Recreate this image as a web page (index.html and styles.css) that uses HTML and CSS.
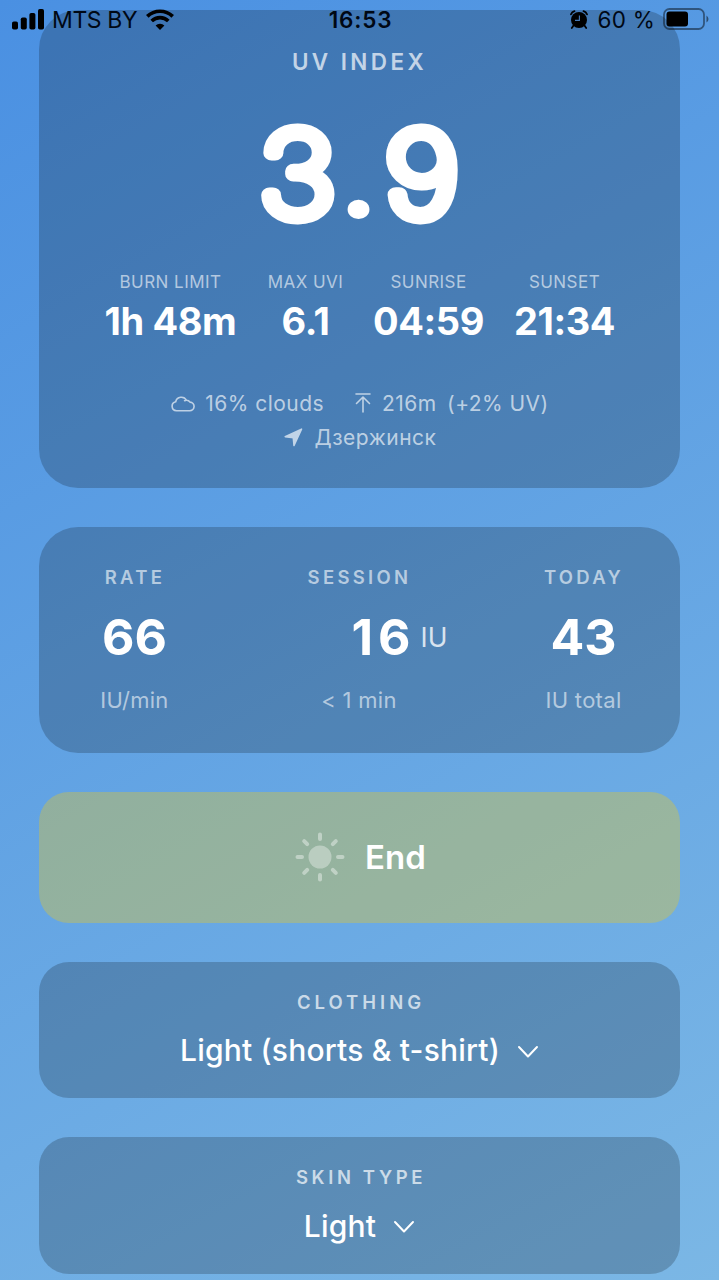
FILE: index.html
```html
<!DOCTYPE html>
<html lang="en">
<head>
<meta charset="utf-8">
<title>UV Index</title>
<link rel="stylesheet" href="styles.css">
</head>
<body>
<header class="status">
  <div class="status-left">
    <svg class="signal" width="32" height="21" viewBox="0 0 32 21"><rect x="0" y="12.5" width="6" height="8" rx="1.8"/><rect x="8.8" y="8.5" width="6" height="12" rx="1.8"/><rect x="17.4" y="4" width="6" height="16.500" rx="1.8"/><rect x="26" y="0" width="6" height="20.500" rx="1.8"/></svg>
    <span class="carrier">MTS BY</span>
    <svg width="28" height="21" viewBox="0 0 28 21"><g fill="none" stroke="#000" stroke-width="3.700"><path d="M1.300 7.400A18.200 18.200 0 0 1 26.700 7.400"/><path d="M5.700 12A12 12 0 0 1 22.300 12"/></g><path d="M14 21L9.600 16.500A6.300 6.300 0 0 1 18.400 16.500Z"/></svg>
  </div>
  <span class="clock">16:53</span>
  <div class="status-right">
    <svg width="18" height="19" viewBox="0 0 18 19"><circle cx="9" cy="10" r="8"/><path d="M1 4.300A5 5 0 0 1 4.500 1.200M13.500 1.200A5 5 0 0 1 17 4.300M3.500 15.500L1.800 18M14.500 15.500L16.200 18" fill="none" stroke="#000" stroke-width="1.800" stroke-linecap="round"/><path d="M9.400 5.500V10.400H5" fill="none" stroke="#467ab7" stroke-width="1.100"/></svg>
    <span class="percent">60 %</span>
    <svg width="46" height="22" viewBox="0 0 46 22"><rect x="1" y="1" width="40" height="20" rx="5.500" fill="none" stroke="#000" stroke-opacity=".45" stroke-width="1.800"/><rect x="3.500" y="3.500" width="21.500" height="15" rx="3"/><path d="M43.500 7.500Q45.500 9 45.500 11T43.500 14.500Z" fill-opacity=".5"/></svg>
  </div>
</header>
<main class="screen">
  <section class="card uv">
    <h1 class="uv-title">UV INDEX</h1>
    <svg class="uv-value" width="220" height="160" viewBox="0 0 220 160"><text transform="scale(1.13 1)" x="42 96 152" y="122.500" text-anchor="middle">3<tspan class="point">.</tspan>9</text></svg>
    <div class="stats">
      <div class="stat"><span class="stat-label">BURN LIMIT</span><span class="stat-value">1h 48m</span></div>
      <div class="stat"><span class="stat-label">MAX UVI</span><span class="stat-value">6.1</span></div>
      <div class="stat"><span class="stat-label">SUNRISE</span><span class="stat-value">04:59</span></div>
      <div class="stat"><span class="stat-label">SUNSET</span><span class="stat-value">21:34</span></div>
    </div>
    <div class="conditions">
      <svg width="24" height="17" viewBox="0 0 24 17"><path d="M5.500 15.700H18.500A4.300 4.300 0 0 0 19 7.100A4 4 0 0 0 15.400 5.200A5.800 5.800 0 0 0 4.700 6.800A4.500 4.500 0 0 0 5.500 15.700ZM15.400 5.200A4 4 0 0 0 13.600 5.700"/></svg>
      <span class="clouds">16% clouds</span>
      <svg class="altitude-icon" width="16" height="20" viewBox="0 0 16 20"><path d="M1 1H15M8 19V4M1.500 10.500L8 4L14.500 10.500"/></svg>
      <span class="altitude">216m</span>
      <span class="boost">(+2% UV)</span>
    </div>
    <div class="place">
      <svg width="19" height="19" viewBox="0 0 19 19"><path d="M1.200 8.700L17.500 1.200L10 17.500L9.300 9.800Z"/></svg>
      <span>Дзержинск</span>
    </div>
  </section>
  <section class="card dose">
    <div class="dose-col"><span class="dose-label">RATE</span><span class="dose-value">66</span><span class="dose-note">IU/min</span></div>
    <div class="dose-col session"><span class="dose-label">SESSION</span><span class="dose-value">16<small class="unit">IU</small></span><span class="dose-note">&lt; 1 min</span></div>
    <div class="dose-col"><span class="dose-label">TODAY</span><span class="dose-value">43</span><span class="dose-note">IU total</span></div>
  </section>
  <button class="end">
    <svg width="50" height="50" viewBox="0 0 50 50"><circle cx="25" cy="25" r="11.500"/><path d="M25 2.500V7M25 43V47.500M2.500 25H7M43 25H47.500M9.200 9.200L12.200 12.200M37.800 37.800L40.800 40.800M9.200 40.800L12.200 37.800M37.800 12.200L40.800 9.200"/></svg>
    <span>End</span>
  </button>
  <section class="card picker">
    <h2 class="picker-label">CLOTHING</h2>
    <div class="picker-value"><span class="clothing-text">Light (shorts &amp; t-shirt)</span><svg width="22" height="14" viewBox="0 0 22 14"><path d="M2 2L11 11.500L20 2"/></svg></div>
  </section>
  <section class="card picker">
    <h2 class="picker-label skin">SKIN TYPE</h2>
    <div class="picker-value"><span>Light</span><svg width="22" height="14" viewBox="0 0 22 14"><path d="M2 2L11 11.500L20 2"/></svg></div>
  </section>
</main>
</body>
</html>
```
FILE: styles.css
```css
* { box-sizing: border-box; }
body {
  margin: 0;
  height: 1280px;
  overflow: hidden;
  position: relative;
  background: linear-gradient(150.7deg, #4a90e2, #7bb7e5);
  color: #fff;
  font-family: Inter, "Liberation Sans", sans-serif;
}
svg { display: block; flex: none; }
span, h1, h2 { white-space: nowrap; }

/* The status bar floats over the scrolled content. */
.status {
  position: absolute;
  inset: 0 0 auto;
  z-index: 1;
  height: 38px;
  padding: 0 10px 0 12px;
  display: flex;
  justify-content: space-between;
  align-items: center;
  color: #000814;
}
.status-left, .status-right { display: flex; align-items: center; width: 240px; }
.status-right { justify-content: flex-end; }
.carrier { margin: 2px 9px 0 8px; font-size: 23px; letter-spacing: -.4px; }
.clock { font-size: 22.500px; font-weight: 600; letter-spacing: .8px; }
.percent { margin: 1px 8px 0 10px; font-size: 22.500px; letter-spacing: .2px; }

.screen {
  padding: 10px 39px 0;
  display: flex;
  flex-direction: column;
  gap: 39px;
}
.card { flex: none; background: rgba(0, 0, 0, .2); border-radius: 39px; }

.uv { height: 478px; display: flex; flex-direction: column; align-items: center; }
.uv-title {
  margin: 37px 0 0;
  font-size: 22.500px;
  line-height: 30px;
  font-weight: 600;
  letter-spacing: 3.400px;
  color: rgba(255, 255, 255, .7);
}
.uv-value { margin-top: 17px; }
/* A thin face with a round-joined outline gives rounded terminals. */
.uv-value text {
  font-size: 115.500px;
  font-weight: 130;
  font-variation-settings: "opsz" 14;
  fill: #fff;
  stroke: #fff;
  stroke-width: 15px;
  stroke-linejoin: round;
}
.uv-value .point { font-weight: 400; stroke-width: 4px; }
.stats {
  margin-top: 16px;
  display: grid;
  grid-template-columns: 134px 76px 110px 102px;
  column-gap: 30px;
}
.stat { display: flex; flex-direction: column; align-items: center; }
.stat-label { font-size: 17px; line-height: 24px; color: rgba(255, 255, 255, .6); letter-spacing: .45px; }
.stat-value { margin-top: 3px; font-size: 38px; line-height: 48px; font-weight: 650; letter-spacing: -.4px; }
.conditions {
  margin-top: 41px;
  height: 34px;
  padding-left: 1px;
  display: flex;
  align-items: center;
  color: rgba(255, 255, 255, .65);
  font-size: 21px;
  letter-spacing: .45px;
}
.conditions path { fill: none; stroke: rgba(255, 255, 255, .65); stroke-width: 1.600; stroke-linecap: round; stroke-linejoin: round; }
.clouds { margin-left: 10px; }
.altitude-icon { margin-left: 31px; }
.altitude { margin-left: 11px; }
.boost { margin-left: 10.500px; }
.place { height: 34px; padding-left: 1px; display: flex; align-items: center; gap: 12px; color: rgba(255, 255, 255, .65); font-size: 21px; letter-spacing: .5px; }
.place path { fill: #c1d4e8; stroke: #c1d4e8; stroke-width: 1.600; stroke-linejoin: round; }

.dose { height: 226px; padding: 37px 57px 0 56px; display: flex; justify-content: space-between; }
.dose-col { display: flex; flex-direction: column; align-items: center; width: 79px; }
.dose-label { padding-left: 1px; font-size: 18.500px; line-height: 26px; font-weight: 600; letter-spacing: 3.300px; color: rgba(255, 255, 255, .6); }
.dose-value { margin-top: 17px; font-size: 50px; line-height: 60px; height: 60px; font-weight: 700; }
.dose-note { margin-top: 19px; font-size: 22px; line-height: 28px; font-weight: 380; letter-spacing: .3px; color: rgba(255, 255, 255, .58); }
.session .dose-value { align-self: flex-start; margin-left: 32px; display: flex; align-items: center; letter-spacing: 5px; }
.unit { margin-left: 5px; font-size: 26.500px; font-weight: 400; letter-spacing: 0; color: rgba(255, 255, 255, .8); }

.end {
  flex: none;
  height: 130.500px;
  padding: 0 0 0 2px;
  border: 0;
  border-radius: 30px;
  background: rgba(255, 204, 0, .3);
  display: flex;
  justify-content: center;
  align-items: center;
  gap: 20px;
  color: #fff;
  font: 600 33px Inter, sans-serif;
}
.end circle { fill: rgba(255, 255, 255, .35); }
.end path { stroke: rgba(255, 255, 255, .4); stroke-width: 4; stroke-linecap: round; }

.picker { height: 136.500px; border-radius: 30px; display: flex; flex-direction: column; align-items: center; }
.picker-label { margin: 27px 0 0; padding-left: 3px; font-size: 18.500px; line-height: 26px; font-weight: 600; letter-spacing: 4px; color: rgba(255, 255, 255, .7); }
.skin { letter-spacing: 3.600px; }
.picker-value { margin-top: 15.500px; height: 40px; display: flex; align-items: center; gap: 17px; font-size: 30px; font-weight: 480; letter-spacing: .2px; }
.picker-value svg { margin-top: 3px; }
.picker-value path { fill: none; stroke: #fff; stroke-width: 2; stroke-linecap: round; stroke-linejoin: round; }
```
